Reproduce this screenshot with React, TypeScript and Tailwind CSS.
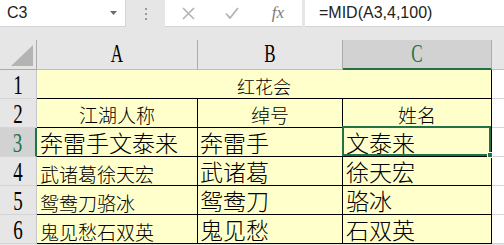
const cjk = "font-['Noto_Sans_CJK_SC',sans-serif] font-light";

const rows = [
  { a: "奔雷手文泰来", aSize: "text-[23px]", b: "奔雷手", c: "文泰来" },
  { a: "武诸葛徐天宏", aSize: "text-[19px]", b: "武诸葛", c: "徐天宏" },
  { a: "鸳鸯刀骆冰", aSize: "text-[19px]", b: "鸳鸯刀", c: "骆冰" },
  { a: "鬼见愁石双英", aSize: "text-[19px]", b: "鬼见愁", c: "石双英" },
];

function RowHead({ n, active }: { n: number; active?: boolean }) {
  return (
    <div
      className={`h-[29px] flex items-center justify-center border-b border-[#d4d4d4] ${
        active ? "bg-[#d2d2d2] border-r-2 border-r-[#217346] text-[#217346]" : "bg-[#e6e6e6] border-r border-r-[#c6c6c6] text-black"
      }`}
    >
      <span className="font-['Liberation_Serif',serif] text-[19px] leading-none scale-y-[1.4] inline-block">{n}</span>
    </div>
  );
}

function ColHead({ label, w, active }: { label: string; w: string; active?: boolean }) {
  return (
    <div
      className={`${w} h-[30px] flex items-center justify-center border-r border-[#ababab] ${
        active ? "bg-[#d2d2d2] border-b-2 border-b-[#217346] text-[#217346]" : "bg-[#e6e6e6] border-b border-b-[#bfbfbf] text-black"
      }`}
    >
      <span className="font-['Liberation_Serif',serif] text-[17px] leading-none scale-y-[1.45] inline-block">{label}</span>
    </div>
  );
}

export default function App() {
  return (
    <div className="w-[504px] h-[245px] bg-[#e6e6e6] overflow-hidden font-['Liberation_Sans',sans-serif]">
      {/* Formula bar */}
      <div className="h-[27px] flex">
        <div className="w-[126px] bg-white border-r border-b border-[#d4d4d4] flex items-center justify-between pl-[7px] pr-[8px]">
          <span className="text-[16px] text-[#222]">C3</span>
          <svg width="7" height="4" viewBox="0 0 7 4"><path d="M0 0h7L3.5 4z" fill="#6b6b6b" /></svg>
        </div>
        <div className="w-[39px] flex flex-col items-center justify-center gap-[3px] pl-[1px]">
          <div className="w-[2px] h-[2px] bg-[#9a9a9a]" />
          <div className="w-[2px] h-[2px] bg-[#9a9a9a]" />
          <div className="w-[2px] h-[2px] bg-[#9a9a9a]" />
        </div>
        <div className="w-[137px] bg-white border-b border-[#d4d4d4] flex items-center">
          <div className="w-[44px] flex justify-center pl-[2px]">
            <svg width="13" height="13" viewBox="0 0 13 13"><path d="M1 1l11 11M12 1L1 12" stroke="#b3b3b3" strokeWidth="1.6" /></svg>
          </div>
          <div className="w-[45px] flex justify-center">
            <svg width="14" height="12" viewBox="0 0 14 12"><path d="M1 6.5l4 4.5L13 1" stroke="#b3b3b3" strokeWidth="1.8" fill="none" /></svg>
          </div>
          <div className="w-[48px] flex justify-center">
            <span className="font-['Liberation_Serif',serif] italic text-[17px] text-[#7a7a7a]">fx</span>
          </div>
        </div>
        <div className="w-[3px]" />
        <div className="flex-1 bg-white border-b border-[#d4d4d4] flex items-center pl-[14px]">
          <span className="text-[16px] text-[#222]">=MID(A3,4,100)</span>
        </div>
      </div>
      <div className="h-[13px]" />

      {/* Sheet */}
      <div className="flex">
        {/* Row headers */}
        <div className="w-[37px] flex flex-col">
          <div className="h-[30px] border-r border-b border-[#ababab] bg-[#e6e6e6] flex items-end justify-end pr-[3px] pb-[3px]">
            <svg width="22" height="21" viewBox="0 0 22 21"><path d="M22 0V21H0z" fill="#b4b4b4" /></svg>
          </div>
          <RowHead n={1} />
          <RowHead n={2} />
          <RowHead n={3} active />
          <RowHead n={4} />
          <RowHead n={5} />
          <RowHead n={6} />
        </div>

        {/* Table */}
        <div className="w-[455px] flex flex-col">
          <div className="flex">
            <ColHead label="A" w="w-[161px]" />
            <ColHead label="B" w="w-[145px]" />
            <ColHead label="C" w="w-[149px]" active />
          </div>
          <div className={`h-[29px] bg-[#ffffcc] border-r border-b border-black flex items-end justify-center pb-[3px] ${cjk} text-[18px] leading-none`}>
            红花会
          </div>
          <div className={`flex ${cjk} text-[19px] leading-none`}>
            <div className="w-[161px] h-[29px] bg-[#ffffcc] border-r border-b border-black flex items-end justify-center pb-[3px]">江湖人称</div>
            <div className="w-[145px] h-[29px] bg-[#ffffcc] border-r border-b border-black flex items-end justify-center pb-[3px]">绰号</div>
            <div className="w-[149px] h-[29px] bg-[#ffffcc] border-r border-b border-black flex items-end justify-center pb-[3px]">姓名</div>
          </div>
          {rows.map((r, i) => (
            <div key={r.a} className={`flex ${cjk} leading-none`}>
              <div className={`w-[161px] h-[29px] bg-[#ffffcc] border-r border-b border-black flex items-end pl-[3px] pb-[2px] ${r.aSize}`}>{r.a}</div>
              <div className="w-[145px] h-[29px] bg-[#ffffcc] border-r border-b border-black flex items-end pl-[2px] pb-[2px] text-[23px]">{r.b}</div>
              <div className="w-[149px] h-[29px] bg-[#ffffcc] border-r border-b border-black flex items-end pl-[3px] pb-[2px] text-[23px] relative">
                {r.c}
                {i === 0 && (
                  <div className="absolute -left-[1px] -top-[2px] right-0 bottom-0 border-2 border-[#217346] z-10">
                    <div className="absolute -right-[4px] -bottom-[4px] w-[6px] h-[6px] bg-[#217346] border border-white" />
                  </div>
                )}
              </div>
            </div>
          ))}
        </div>

        {/* Column D sliver */}
        <div className="flex-1 flex flex-col">
          <div className="h-[30px] bg-[#e6e6e6] border-b border-[#bfbfbf]" />
          {[1, 2, 3, 4, 5, 6].map((n) => (
            <div key={n} className="h-[29px] bg-white border-b border-[#d4d4d4]" />
          ))}
        </div>
      </div>
    </div>
  );
}
